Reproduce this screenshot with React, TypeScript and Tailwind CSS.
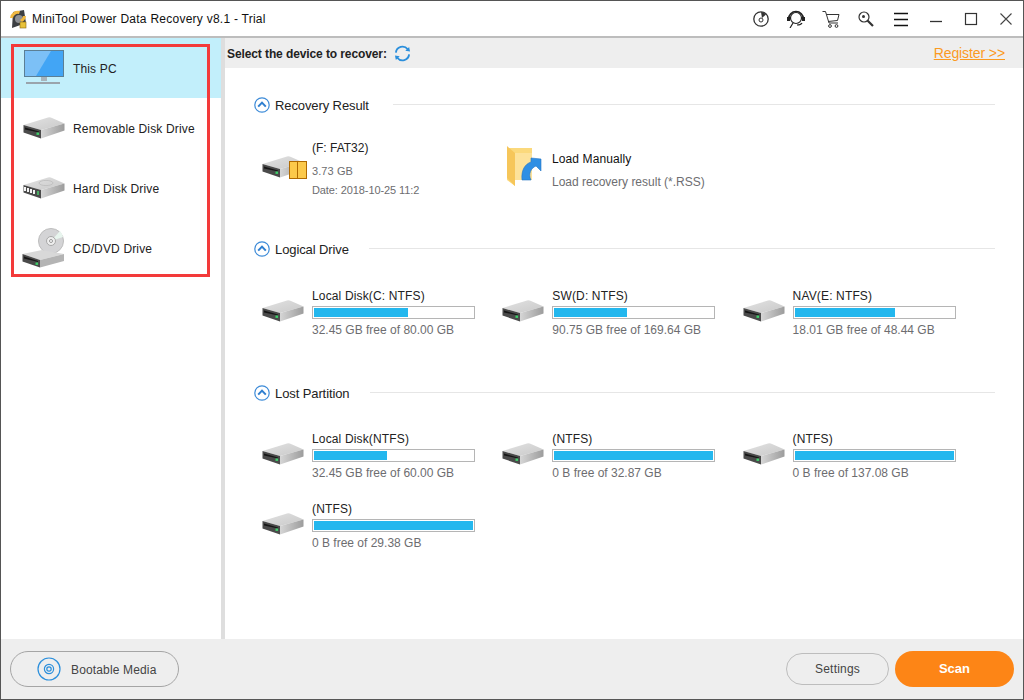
const drives = [
  { name: "Local Disk(C: NTFS)", free: "32.45 GB free of 80.00 GB", fill: 59 },
  { name: "SW(D: NTFS)", free: "90.75 GB free of 169.64 GB", fill: 46 },
  { name: "NAV(E: NTFS)", free: "18.01 GB free of 48.44 GB", fill: 63 },
];

const lost = [
  { name: "Local Disk(NTFS)", free: "32.45 GB free of 60.00 GB", fill: 46 },
  { name: "(NTFS)", free: "0 B free of 32.87 GB", fill: 100 },
  { name: "(NTFS)", free: "0 B free of 137.08 GB", fill: 100 },
  { name: "(NTFS)", free: "0 B free of 29.38 GB", fill: 100 },
];

function DriveIcon({ slots = false, className = "" }: { slots?: boolean; className?: string }) {
  return (
    <svg width="42" height="22" viewBox="0 0 42 22" className={className}>
      <defs>
        <linearGradient id="driveTop" x1="0" y1="0" x2="1" y2="1">
          <stop offset="0" stopColor="#e2e2e2" />
          <stop offset="1" stopColor="#c9c9c9" />
        </linearGradient>
        <linearGradient id="driveSide" x1="0" y1="0" x2="1" y2="0">
          <stop offset="0" stopColor="#d6d6d6" />
          <stop offset="1" stopColor="#9c9c9c" />
        </linearGradient>
      </defs>
      <path d="M0.5 8 L25 0.5 Q27 0 29 1 L41.5 6.5 L18 13 Z" fill="url(#driveTop)" />
      <path d="M18 13 L41.5 6.5 L41.5 13.5 L18 21.5 Z" fill="url(#driveSide)" />
      <path d="M0.5 8 L18 13 L18 21.5 L0.5 15.5 Z" fill="#4a4a4a" />
      {slots ? (
        <g>
          <ellipse cx="23" cy="6" rx="7" ry="2.6" fill="none" stroke="#bdbdbd" strokeWidth="0.8" />
          <path d="M2 10 V14 M5 11 V15 M8 12 V16 M11 13 V17" stroke="#f4f4f4" strokeWidth="2" />
          <path d="M15 14 V18" stroke="#49c46a" strokeWidth="1.6" />
        </g>
      ) : (
        <g>
          <path d="M2 10.5 L16 14.5 L16 15.5 L2 12.5 Z" fill="#171717" />
          <rect x="13.5" y="15.5" width="2.6" height="2.4" fill="#3fd06a" />
        </g>
      )}
    </svg>
  );
}

function MonitorIcon() {
  return (
    <svg width="40" height="36" viewBox="0 0 40 36">
      <rect x="0.5" y="0.5" width="39" height="26" fill="#42a5f5" stroke="#5b7f95" />
      <path d="M1 1 H27 L12 26 H1 Z" fill="#7cc0f6" />
      <rect x="17" y="27" width="6" height="4" fill="#a8b4bc" />
      <rect x="2" y="32" width="34" height="2" fill="#9aa4ac" />
    </svg>
  );
}

function CdIcon() {
  return (
    <svg width="44" height="40" viewBox="0 0 44 40">
      <circle cx="29" cy="13" r="12.5" fill="#d4d4d6" stroke="#bdbdbd" />
      <path d="M29 13 L38 3 A13 13 0 0 1 41 9 Z" fill="#e8f5ee" />
      <circle cx="29" cy="13" r="4.5" fill="#eeeeee" stroke="#a8a8a8" />
      <circle cx="29" cy="13" r="1.5" fill="#fff" stroke="#999" />
      <path d="M0.5 26 L20 22 L42 26 L18 32 Z" fill="#d8d8d8" />
      <path d="M18 32 L42 26 L42 33 L18 39.5 Z" fill="#b4b4b4" />
      <path d="M0.5 26 L18 32 L18 39.5 L0.5 33.5 Z" fill="#4a4a4a" />
      <path d="M2 28.5 L16 33 L16 34 L2 30.5 Z" fill="#171717" />
      <rect x="13.5" y="34.5" width="2.6" height="2.4" fill="#3fd06a" />
    </svg>
  );
}

function Chevron() {
  return (
    <svg width="16" height="16" viewBox="0 0 16 16" className="shrink-0">
      <circle cx="8" cy="8" r="7.2" fill="none" stroke="#3d8bd8" strokeWidth="1.2" />
      <path d="M4.2 9.6 L8 5.6 L11.8 9.6" fill="none" stroke="#2f7fd0" strokeWidth="2" />
    </svg>
  );
}

function Section({ title, lineLeft }: { title: string; lineLeft: string }) {
  return (
    <div className="flex h-5 items-center pl-[29px] pr-7">
      <Chevron />
      <span className="ml-[5px] mt-[2px] text-[13px] tracking-[-0.1px] text-[#222]">{title}</span>
      <div className={`mb-[2px] h-px flex-1 bg-[#e6e6e6] ${lineLeft}`} />
    </div>
  );
}

function DriveItem({ name, free, fill }: { name: string; free: string; fill: number }) {
  return (
    <div className="flex h-[70px] w-[240.3px] items-start">
      <DriveIcon className="mt-[18px] shrink-0" />
      <div className="ml-2 w-[163px]">
        <div className="mt-[6px] h-4 text-xs leading-4 tracking-[0.15px] text-[#222]">{name}</div>
        <div className="mt-[2px] h-[13px] border border-[#b5b5b5] bg-white p-px">
          <div className="h-full bg-[#23b7ee]" style={{ width: `${fill}%` }} />
        </div>
        <div className="mt-[3px] whitespace-nowrap text-xs leading-4 text-[#6d6d70]">{free}</div>
      </div>
    </div>
  );
}

function SideItem({ label, active, children }: { label: string; active?: boolean; children: React.ReactNode }) {
  return (
    <div className={`flex h-[60px] items-center ${active ? "bg-[#c2effb]" : ""}`}>
      <div className="flex w-[72px] shrink-0 justify-center pl-[14px]">{children}</div>
      <span className="mt-[1px] text-xs tracking-[0.15px] text-[#222]">{label}</span>
    </div>
  );
}

export default function App() {
  return (
    <div className="relative flex h-[700px] w-[1024px] flex-col border border-[#555] bg-white font-['Liberation_Sans',sans-serif]">
      {/* title bar */}
      <div className="flex h-[37px] shrink-0 items-center border-b-2 border-[#bdbdbd] bg-white">
        <svg width="20" height="22" viewBox="0 0 20 22" className="ml-[7px]">
          <path d="M5 4 L16 2 L18 15 L4 20 Z" fill="#3c3f42" />
          <circle cx="11" cy="11" r="4" fill="#8d9094" />
          <path d="M2 10 A8 8 0 0 1 12 3 L11 6 A5 5 0 0 0 5 10 Z" fill="#f0b840" />
          <path d="M18 8 A8 8 0 0 1 14 14 L12 12 A5 5 0 0 0 15 8 Z" fill="#f0b840" />
          <rect x="12" y="14" width="6" height="6" fill="#e8c23a" stroke="#8a6a10" strokeWidth="0.6" />
        </svg>
        <span className="ml-[4px] text-xs tracking-[0.25px] text-[#111]">MiniTool Power Data Recovery v8.1 - Trial</span>
        <div className="ml-auto flex text-[#333]">
          <TopIcon>
            <circle cx="9" cy="9" r="7.2" fill="none" stroke="#333" strokeWidth="1.3" />
            <circle cx="9" cy="10" r="2" fill="none" stroke="#333" />
            <path d="M9 2 A7 7 0 0 1 14 4.5 L10 8 Z" fill="#333" />
          </TopIcon>
          <TopIcon>
            <circle cx="9" cy="8" r="5.5" fill="none" stroke="#222" strokeWidth="1.2" />
            <path d="M1.5 9 A7.5 7.5 0 0 1 16.5 9" fill="none" stroke="#222" strokeWidth="1.6" />
            <rect x="0" y="7" width="3" height="4" fill="#222" />
            <rect x="15" y="7" width="3" height="4" fill="#222" />
            <path d="M3 18 L6 13 M15 13 C14 15 12 15 10 15" fill="none" stroke="#222" strokeWidth="1.2" />
          </TopIcon>
          <TopIcon>
            <path d="M0.5 1.5 H3.5 L7 13 H16" fill="none" stroke="#333" />
            <path d="M4.5 4.5 H17 L15.5 10.5 L6 11.5" fill="none" stroke="#333" />
            <circle cx="8" cy="16" r="1.4" fill="none" stroke="#333" />
            <circle cx="14.5" cy="16" r="1.4" fill="none" stroke="#333" />
          </TopIcon>
          <TopIcon>
            <circle cx="7" cy="7" r="5" fill="none" stroke="#333" strokeWidth="1.2" />
            <circle cx="6.5" cy="6.5" r="1.5" fill="#333" />
            <path d="M10.5 10.5 L16 16" stroke="#333" strokeWidth="2.2" />
          </TopIcon>
          <TopIcon>
            <path d="M2 3.5 H16 M2 9.5 H16 M2 15.5 H16" stroke="#111" strokeWidth="1.3" />
          </TopIcon>
          <TopIcon>
            <path d="M3 11.5 H15" stroke="#333" strokeWidth="1.3" />
          </TopIcon>
          <TopIcon>
            <rect x="3.5" y="3.5" width="11" height="11" fill="none" stroke="#333" strokeWidth="1.2" />
          </TopIcon>
          <TopIcon>
            <path d="M3.5 3.5 L14.5 14.5 M14.5 3.5 L3.5 14.5" stroke="#444" strokeWidth="1.1" />
          </TopIcon>
        </div>
      </div>

      <div className="flex min-h-0 flex-1">
        {/* sidebar */}
        <div className="w-[220px] shrink-0">
          <SideItem label="This PC" active>
            <MonitorIcon />
          </SideItem>
          <SideItem label="Removable Disk Drive">
            <DriveIcon />
          </SideItem>
          <SideItem label="Hard Disk Drive">
            <DriveIcon slots />
          </SideItem>
          <SideItem label="CD/DVD Drive">
            <CdIcon />
          </SideItem>
        </div>
        <div className="w-[4px] shrink-0 bg-[#dedede]" />

        {/* main */}
        <div className="flex min-w-0 flex-1 flex-col">
          <div className="flex h-[30px] shrink-0 items-center bg-[#eeeeee] pl-[2px] pr-[18px] pt-[1px]">
            <span className="text-xs font-bold tracking-[-0.1px] text-[#222]">Select the device to recover:</span>
            <svg width="17" height="17" viewBox="0 0 18 18" className="ml-[7px]">
              <path d="M2 8 A7 7 0 0 1 14.5 4.5" fill="none" stroke="#2b8fdc" strokeWidth="2" />
              <path d="M16 10 A7 7 0 0 1 3.5 13.5" fill="none" stroke="#2b8fdc" strokeWidth="2" />
              <path d="M12 6 L17 7 L16 2 Z" fill="#2b8fdc" />
              <path d="M6 12 L1 11 L2 16 Z" fill="#2b8fdc" />
            </svg>
            <a className="mb-[2px] ml-auto text-sm tracking-[-0.1px] text-[#fb9a1f] underline">Register &gt;&gt;</a>
          </div>

          <div className="flex-1 pt-[27px]">
            <Section title="Recovery Result" lineLeft="ml-[24px]" />
            <div className="mt-[23px] flex h-[70px] pl-[37px]">
              <div className="flex w-[245px] items-start">
                <div className="relative mt-[16px] h-[26px] w-[42px] shrink-0">
                  <DriveIcon className="mt-[2px]" />
                  <div className="absolute left-[27px] top-[7px] flex">
                    <div className="h-[18px] w-[9px] border border-[#b06a00] bg-[#fcc94a]" />
                    <div className="h-[18px] w-[9px] border border-l-0 border-[#b06a00] bg-[#fcc94a]" />
                  </div>
                </div>
                <div className="ml-2 text-[#6d6d70]">
                  <div className="mt-[2px] text-xs leading-4 text-[#222]">(F: FAT32)</div>
                  <div className="mt-[7px] text-[11px] leading-4 tracking-[0.1px]">3.73 GB</div>
                  <div className="mt-[3px] text-[11px] leading-4 tracking-[-0.1px]">Date: 2018-10-25 11:2</div>
                </div>
              </div>
              <div className="flex items-start">
                <svg width="36" height="42" viewBox="0 0 36 42" className="mt-[8px]">
                  <path d="M0 2 H25 V34 H8 V40 L0 34 Z" fill="#fbd97c" />
                  <path d="M0 0 L8 7 V40 L0 32 Z" fill="#f6c65a" />
                  <path d="M8 7 L25 7 V34 H8 Z" fill="#fde29a" />
                  <path d="M15 34 C14 24 18 18 24 16 V12 L34 13 V25 L29 20 C24 22 21 28 24 34 Z" fill="#2f8fe4" stroke="#2676c4" strokeWidth="0.6" />
                </svg>
                <div className="ml-[9px]">
                  <div className="mt-[13px] text-xs leading-4 tracking-[0.1px] text-[#111]">Load Manually</div>
                  <div className="mt-[7px] text-xs leading-4 text-[#6d6d70]">Load recovery result (*.RSS)</div>
                </div>
              </div>
            </div>

            <div className="mt-[31px]">
              <Section title="Logical Drive" lineLeft="ml-[20px]" />
              <div className="mt-[23px] flex pl-[37px]">
                {drives.map((d) => (
                  <DriveItem key={d.name} {...d} />
                ))}
              </div>
            </div>

            <div className="mt-[31px]">
              <Section title="Lost Partition" lineLeft="ml-[21px]" />
              <div className="mt-[22px] flex flex-wrap pl-[37px]">
                {lost.map((d, i) => (
                  <DriveItem key={i} {...d} />
                ))}
              </div>
            </div>
          </div>
        </div>
      </div>

      {/* footer */}
      <div className="flex h-[60px] shrink-0 items-center bg-[#eeeeee] pl-[9px] pr-[9px]">
        <button className="flex h-9 w-[169px] items-center rounded-full border border-[#a5a5a5] pl-[26px]">
          <svg width="24" height="24" viewBox="0 0 24 24">
            <circle cx="12" cy="12" r="11" fill="none" stroke="#2b8fdc" strokeWidth="1.2" />
            <circle cx="12" cy="12" r="4.6" fill="none" stroke="#2b8fdc" strokeWidth="1.2" />
            <circle cx="12" cy="12" r="2.2" fill="none" stroke="#2b8fdc" strokeWidth="1.2" />
          </svg>
          <span className="ml-[10px] mt-[1px] text-xs tracking-[0.15px] text-[#444]">Bootable Media</span>
        </button>
        <button className="ml-auto h-8 w-[103px] rounded-full border border-[#bdbdbd] text-xs tracking-[0.2px] text-[#444]">Settings</button>
        <button className="ml-[6px] h-9 w-[119px] rounded-full bg-[#fd8516] text-[13px] font-bold text-white">Scan</button>
      </div>

      {/* red annotation frame */}
      <div className="absolute left-[10px] top-[43px] h-[233px] w-[199px] border-[3px] border-[#f33a3a]" />
    </div>
  );
}

function TopIcon({ children }: { children: React.ReactNode }) {
  return (
    <div className="flex w-[35px] items-center justify-center">
      <svg width="18" height="18" viewBox="0 0 18 18">
        {children}
      </svg>
    </div>
  );
}
